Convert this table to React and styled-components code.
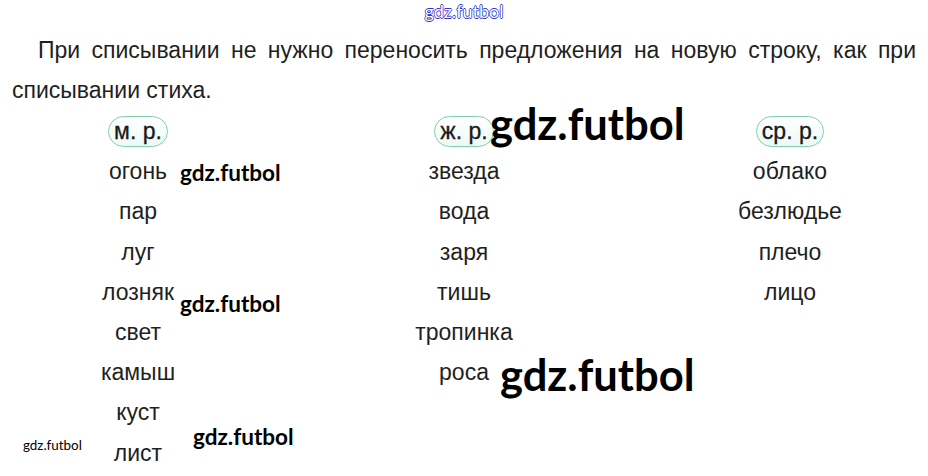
import React from 'react';
import styled, { createGlobalStyle } from 'styled-components';

const GlobalStyle = createGlobalStyle`
    html, body {
        margin: 0;
        padding: 0;
        background: #ffffff;
    }
    body {
        font-family: "Liberation Sans", Arial, sans-serif;
        color: #1f1f1f;
    }
`;

const columns = [
    { label: 'м. р.', words: ['огонь', 'пар', 'луг', 'лозняк', 'свет', 'камыш', 'куст', 'лист'] },
    { label: 'ж. р.', words: ['звезда', 'вода', 'заря', 'тишь', 'тропинка', 'роса'] },
    { label: 'ср. р.', words: ['облако', 'безлюдье', 'плечо', 'лицо'] },
];

// watermark stamps laid over the page
const marks = [
    { x: 180, y: 162, size: 22.5 },
    { x: 490, y: 102, size: 43.5 },
    { x: 180, y: 293, size: 22.5 },
    { x: 500, y: 353, size: 43.5 },
    { x: 193, y: 426, size: 22.5 },
    { x: 23, y: 439, size: 13.4, light: true },
];

const App = () => {
    return (
        <Page>
            <GlobalStyle />
            <Header>gdz.futbol</Header>
            <Text>
                При списывании не нужно переносить предложения на новую строку, как при
                списывании стиха.
            </Text>
            <Columns>
                {columns.map((col) => (
                    <Column key={col.label}>
                        <Cell>
                            <Pill>{col.label}</Pill>
                        </Cell>
                        {col.words.map((w) => (
                            <Cell key={w}>{w}</Cell>
                        ))}
                    </Column>
                ))}
            </Columns>
            {marks.map((m, i) => (
                <Mark key={i} $size={m.size} $light={m.light} style={{ left: m.x, top: m.y }}>
                    gdz.futbol
                </Mark>
            ))}
        </Page>
    );
};

const Page = styled.div`
    position: relative;
    width: 928px;
    height: 476px;
    overflow: hidden;
    background: #fff;
`;

const Header = styled.div`
    text-align: center;
    padding-top: 1px;
    height: 29px;
    font-family: Lato, "Open Sans", sans-serif;
    font-size: 18px;
    line-height: 20px;
    color: #fff;
    text-shadow:
        0.7px 0 #3434c8,
        -0.7px 0 #3434c8,
        0 0.7px #3434c8,
        0 -0.7px #3434c8;
`;

const Text = styled.p`
    margin: 0;
    padding: 0 12px;
    font-size: 23px;
    line-height: 40px;
    text-align: justify;
    text-indent: 26px;
`;

const Columns = styled.div`
    display: grid;
    grid-template-columns: repeat(3, 200px);
    column-gap: 126px;
    padding-left: 38px;
    padding-top: 1px;
`;

const Column = styled.div`
    display: flex;
    flex-direction: column;
    align-items: center;
`;

const Cell = styled.div`
    height: 40.2px;
    line-height: 40px;
    font-size: 23px;
    display: flex;
    align-items: center;
    justify-content: center;
    white-space: nowrap;
`;

const Pill = styled.span`
    display: inline-flex;
    align-items: center;
    height: 29px;
    padding: 0 5px;
    border: 1.5px solid #7fd0ad;
    border-radius: 16px;
    background: linear-gradient(#ffffff, #eef9f4);
    font-size: 23px;
    color: #1a1a1a;
    -webkit-text-stroke: 0.3px #1a1a1a;
`;

const Mark = styled.div`
    position: absolute;
    font-family: Lato, "Open Sans", sans-serif;
    font-weight: ${(p) => (p.$light ? 'normal' : 'bold')};
    font-size: ${(p) => p.$size}px;
    line-height: 1;
    color: #000;
    white-space: nowrap;
`;

export default App;
